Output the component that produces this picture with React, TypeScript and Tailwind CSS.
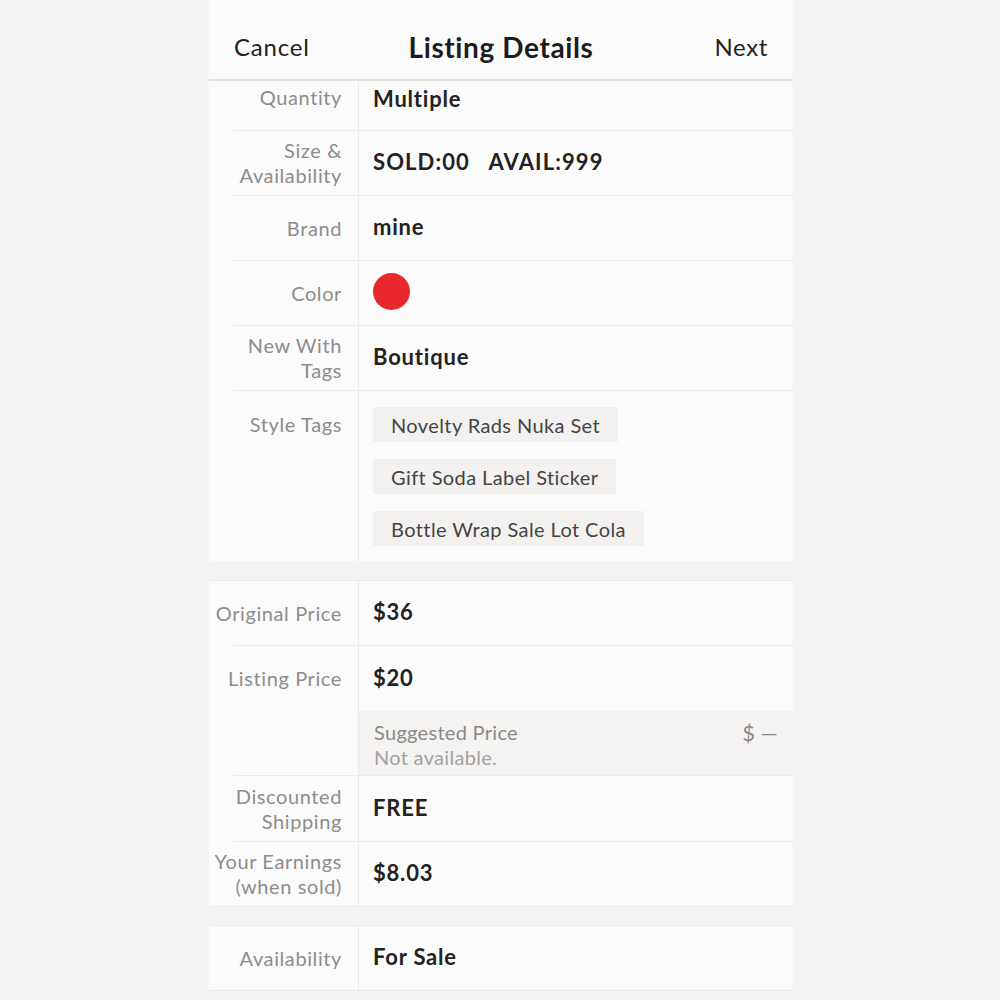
import React from "react"

type Row = {
  label: string[]
  value?: React.ReactNode
}

const font = { fontFamily: "Lato, 'Noto Sans', sans-serif" }

const labelText = "text-[20px] leading-[25px] tracking-[0.6px] text-[#8d8c8b]"
const valueText = "text-[22px] font-bold tracking-[0.8px] text-[#222]"

function Divider() {
  // row separators are indented from the left edge
  return (
    <div className="flex h-px">
      <div className="w-[24px]" />
      <div className="flex-1 bg-[#ebeae9]" />
    </div>
  )
}

function Label({ lines }: { lines: string[] }) {
  return (
    <div className={`w-[150px] shrink-0 border-r border-[#ebeae9] pr-[16px] flex flex-col justify-center items-end text-right ${labelText}`}>
      {lines.map((l) => (
        <span key={l} className="whitespace-nowrap">{l}</span>
      ))}
    </div>
  )
}

function Field({ label, value, height = "h-[64px]" }: Row & { height?: string }) {
  return (
    <div className={`flex ${height}`}>
      <Label lines={label} />
      <div className={`flex-1 pl-[14px] pb-[3px] flex items-center ${valueText}`}>{value}</div>
    </div>
  )
}

function Tag({ text }: { text: string }) {
  return (
    <div className="self-start bg-[#f3f1ef] h-[35px] px-[18px] flex items-center text-[20px] text-[#444] tracking-[0.4px]">
      {text}
    </div>
  )
}

export default function App() {
  return (
    <div className="w-full h-[1000px] bg-[#f6f5f4] overflow-hidden" style={font}>
      <div className="ml-[209px] w-[584px] h-full bg-[#f5f4f2] flex flex-col">
        {/* nav bar */}
        <div className="h-[81px] shrink-0 bg-[#fcfbfb] border-b-2 border-[#e4e3e2] flex items-center justify-between px-[25px] pt-[14px]">
          <span className="text-[24px] tracking-[0.8px] text-[#222] w-[100px]">Cancel</span>
          <span className="text-[28px] font-bold text-[#1c1c1c] tracking-[0.6px]">Listing Details</span>
          <span className="text-[24px] tracking-[0.6px] text-[#222] w-[100px] text-right">Next</span>
        </div>

        {/* item details */}
        <div className="bg-[#fcfbfb]">
          <div className="flex h-[49px]">
            <div className={`w-[150px] shrink-0 border-r border-[#ebeae9] pr-[16px] flex items-start pt-[4px] justify-end ${labelText}`}>
              Quantity
            </div>
            <div className={`flex-1 pl-[14px] flex items-start pt-[1px] ${valueText}`}>Multiple</div>
          </div>
          <Divider />
          <Field
            label={["Size &", "Availability"]}
            value={<span className="tracking-[1.1px]">SOLD:00&nbsp;&nbsp;&nbsp;AVAIL:999</span>}
          />
          <Divider />
          <Field label={["Brand"]} value="mine" />
          <Divider />
          <Field
            label={["Color"]}
            value={<span className="block w-[37px] h-[37px] rounded-full bg-[#e8282d]" />}
          />
          <Divider />
          <Field label={["New With", "Tags"]} value="Boutique" />
          <Divider />
          <div className="flex h-[170px]">
            <div className={`w-[150px] shrink-0 border-r border-[#ebeae9] pr-[16px] pt-[21px] text-right ${labelText}`}>
              Style Tags
            </div>
            <div className="flex-1 pl-[14px] pt-[16px] flex flex-col gap-[17px]">
              <Tag text="Novelty Rads Nuka Set" />
              <Tag text="Gift Soda Label Sticker" />
              <Tag text="Bottle Wrap Sale Lot Cola" />
            </div>
          </div>
        </div>

        <div className="h-[20px] shrink-0 border-b border-[#ebeae9]" />

        {/* pricing */}
        <div className="bg-[#fcfbfb]">
          <Field label={["Original Price"]} value="$36" />
          <Divider />
          <div className="flex">
            <div className={`w-[150px] shrink-0 border-r border-[#ebeae9] pr-[16px] pt-[20px] text-right ${labelText}`}>
              Listing Price
            </div>
            <div className="flex-1 flex flex-col">
              <div className={`h-[65px] pl-[14px] pb-[3px] flex items-center ${valueText}`}>$20</div>
              <div className="h-[64px] bg-[#f4f3f1] pl-[15px] pr-[15px] pt-[9px] flex justify-between">
                <div className="flex flex-col text-[20px] leading-[25px] tracking-[0.3px]">
                  <span className="text-[#8a8988]">Suggested Price</span>
                  <span className="text-[#a3a2a1]">Not available.</span>
                </div>
                <span className="text-[22px] leading-[25px] text-[#8a8988]">$ —</span>
              </div>
            </div>
          </div>
          <Divider />
          <Field label={["Discounted", "Shipping"]} value="FREE" height="h-[65px]" />
          <Divider />
          <Field label={["Your Earnings", "(when sold)"]} value="$8.03" />
        </div>

        <div className="h-[20px] shrink-0 border-y border-[#ebeae9]" />

        <div className="bg-[#fcfbfb] border-b border-[#ebeae9]">
          <Field label={["Availability"]} value="For Sale" />
        </div>
      </div>
    </div>
  )
}
